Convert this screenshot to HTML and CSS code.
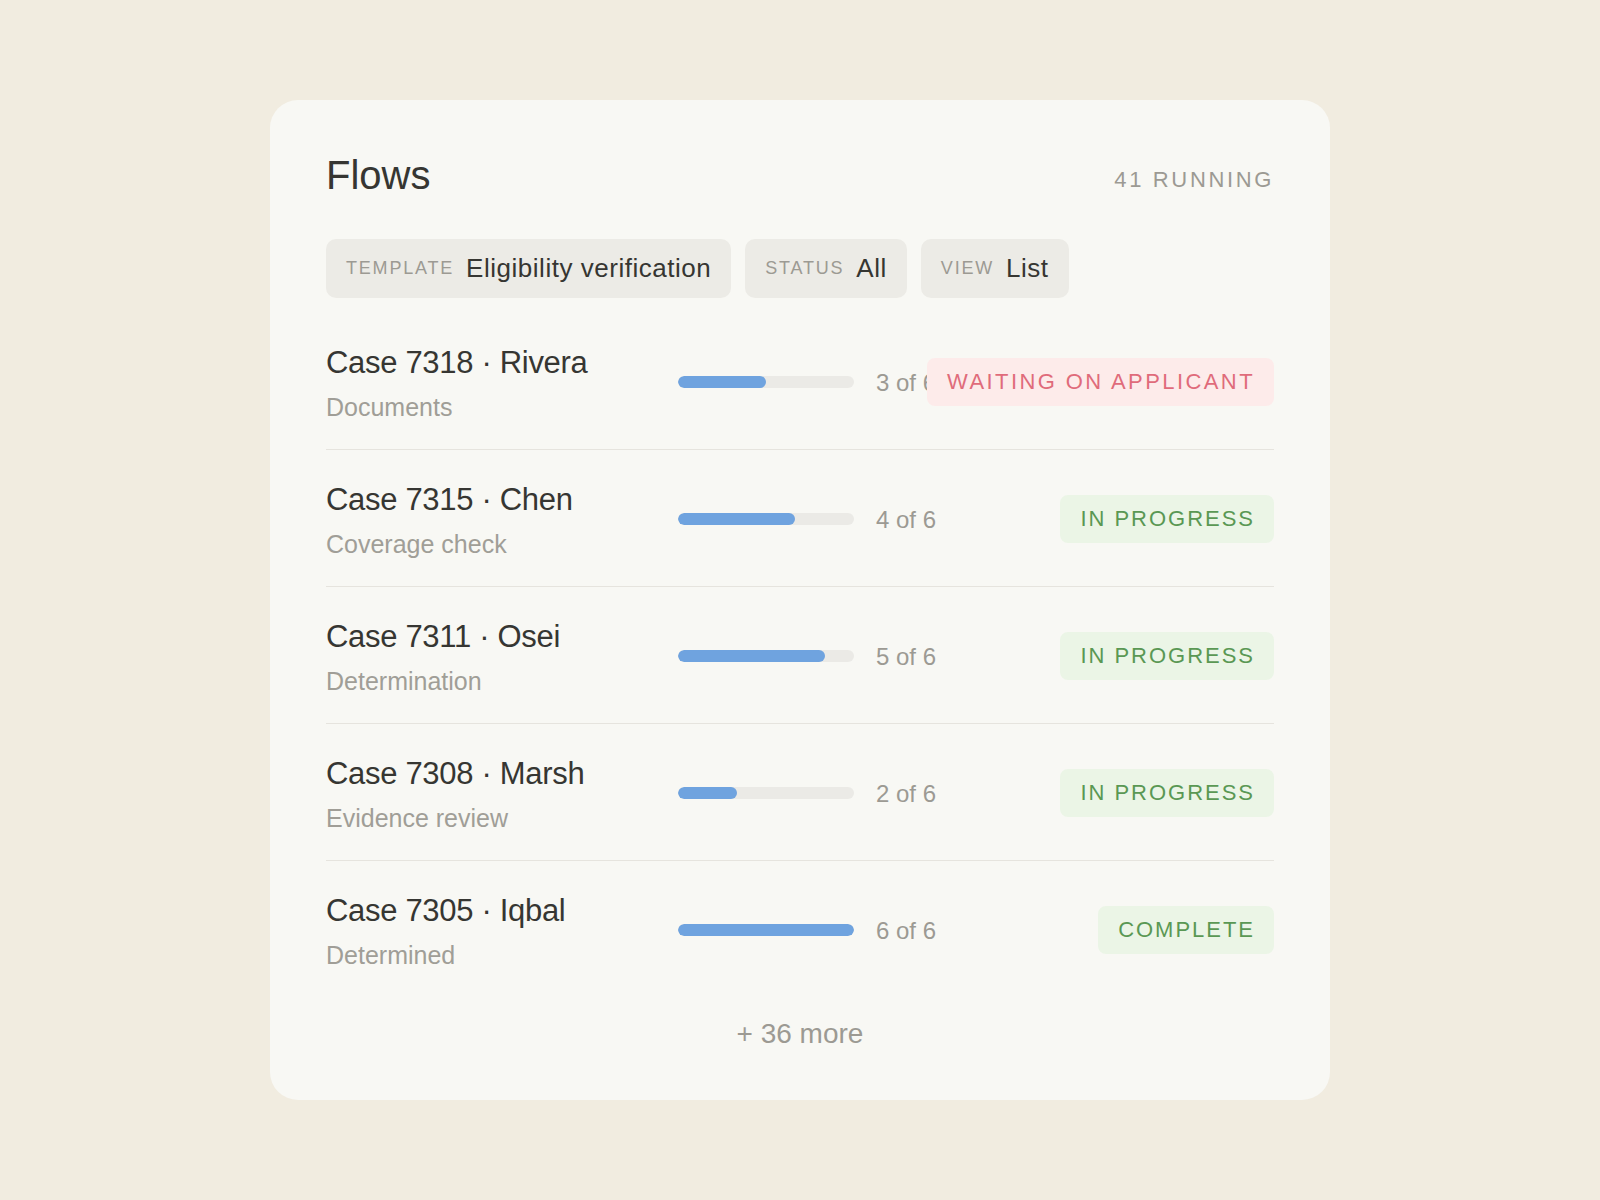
FILE: index.html
```html
<!DOCTYPE html>
<html lang="en">
<head>
    <meta charset="UTF-8">
    <meta name="viewport" content="width=device-width, initial-scale=1.0">
    <title>Flows</title>
    <link rel="stylesheet" href="styles.css">
</head>
<body>

    <div class="card">
        <div class="card-header">
            <h1>Flows</h1>
            <span class="running">41 running</span>
        </div>

        <div class="filters">
            <div class="chip"><span class="chip-label">Template</span><span class="chip-value">Eligibility verification</span></div>
            <div class="chip"><span class="chip-label">Status</span><span class="chip-value">All</span></div>
            <div class="chip"><span class="chip-label">View</span><span class="chip-value">List</span></div>
        </div>

        <div class="flow-list">
            <div class="flow-row">
                <div class="flow-name">
                    <div class="flow-title">Case 7318 · Rivera</div>
                    <div class="flow-step">Documents</div>
                </div>
                <div class="bar"><div class="bar-fill" style="width: 50%"></div></div>
                <div class="count">3 of 6</div>
                <span class="badge waiting">Waiting on applicant</span>
            </div>

            <div class="flow-row">
                <div class="flow-name">
                    <div class="flow-title">Case 7315 · Chen</div>
                    <div class="flow-step">Coverage check</div>
                </div>
                <div class="bar"><div class="bar-fill" style="width: 66.6%"></div></div>
                <div class="count">4 of 6</div>
                <span class="badge active">In progress</span>
            </div>

            <div class="flow-row">
                <div class="flow-name">
                    <div class="flow-title">Case 7311 · Osei</div>
                    <div class="flow-step">Determination</div>
                </div>
                <div class="bar"><div class="bar-fill" style="width: 83.3%"></div></div>
                <div class="count">5 of 6</div>
                <span class="badge active">In progress</span>
            </div>

            <div class="flow-row">
                <div class="flow-name">
                    <div class="flow-title">Case 7308 · Marsh</div>
                    <div class="flow-step">Evidence review</div>
                </div>
                <div class="bar"><div class="bar-fill" style="width: 33.3%"></div></div>
                <div class="count">2 of 6</div>
                <span class="badge active">In progress</span>
            </div>

            <div class="flow-row">
                <div class="flow-name">
                    <div class="flow-title">Case 7305 · Iqbal</div>
                    <div class="flow-step">Determined</div>
                </div>
                <div class="bar"><div class="bar-fill" style="width: 100%"></div></div>
                <div class="count">6 of 6</div>
                <span class="badge active">Complete</span>
            </div>
        </div>

        <div class="more">+ 36 more</div>
    </div>

</body>
</html>
```

FILE: styles.css
```css
body, html {
    margin: 0;
    padding: 0;
    width: 100%;
    height: 100%;
    font-family: "Liberation Sans", Arial, sans-serif;
    color: #33332f;
    background: #f1ece0;
}

body {
    display: flex;
    align-items: center;
    justify-content: center;
}

.card {
    width: 1060px;
    box-sizing: border-box;
    padding: 56px 56px 48px;
    background: #f8f8f4;
    border-radius: 28px;
}

/* Header */
.card-header {
    display: flex;
    justify-content: space-between;
    align-items: center;
}

h1 {
    margin: 0;
    font-size: 40px;
    line-height: 38px;
    font-weight: 400;
    color: #363632;
}

.running {
    font-size: 22px;
    letter-spacing: 0.12em;
    text-transform: uppercase;
    color: #9c9a93;
    margin-top: 10px;
}

/* Filter chips */
.filters {
    display: flex;
    gap: 14px;
    margin: 45px 0 15px;
}

.chip {
    display: flex;
    align-items: center;
    gap: 12px;
    height: 59px;
    padding: 0 20px;
    background: #ecebe6;
    border-radius: 10px;
}

.chip-label {
    font-size: 18px;
    letter-spacing: 0.1em;
    text-transform: uppercase;
    color: #9c9a93;
}

.chip-value {
    font-size: 26px;
    letter-spacing: 0.02em;
    color: #363632;
}

/* Rows */
.flow-row {
    display: grid;
    grid-template-columns: minmax(0, 1fr) 176px 70px 306px;
    column-gap: 22px;
    align-items: center;
    padding: 30px 0 27px;
    border-bottom: 1px solid #e6e4de;
}

.flow-row:last-child {
    border-bottom: none;
}

.flow-title {
    font-size: 31px;
    line-height: 40px;
    letter-spacing: -0.01em;
    color: #363632;
}

.flow-step {
    margin-top: 9px;
    font-size: 25px;
    line-height: 30px;
    color: #a09e97;
}

.bar {
    height: 12px;
    margin-top: -2px;
    border-radius: 6px;
    background: #ebeae6;
    overflow: hidden;
}

.bar-fill {
    height: 100%;
    border-radius: 6px;
    background: #6fa3df;
}

.count {
    font-size: 24px;
    white-space: nowrap;
    color: #9c9a93;
}

.badge {
    justify-self: end;
    margin-top: -2px;
    display: flex;
    align-items: center;
    height: 48px;
    padding: 0 19px 0 20px;
    border-radius: 8px;
    font-size: 22px;
    letter-spacing: 0.09em;
    text-transform: uppercase;
    white-space: nowrap;
}

.badge.waiting {
    letter-spacing: 0.11em;
    background: #fdebea;
    color: #e06b7b;
}

.badge.active {
    background: #ebf5e6;
    color: #5a9854;
}

.more {
    margin-top: 19px;
    text-align: center;
    font-size: 28px;
    line-height: 36px;
    color: #9c9a93;
}
```
